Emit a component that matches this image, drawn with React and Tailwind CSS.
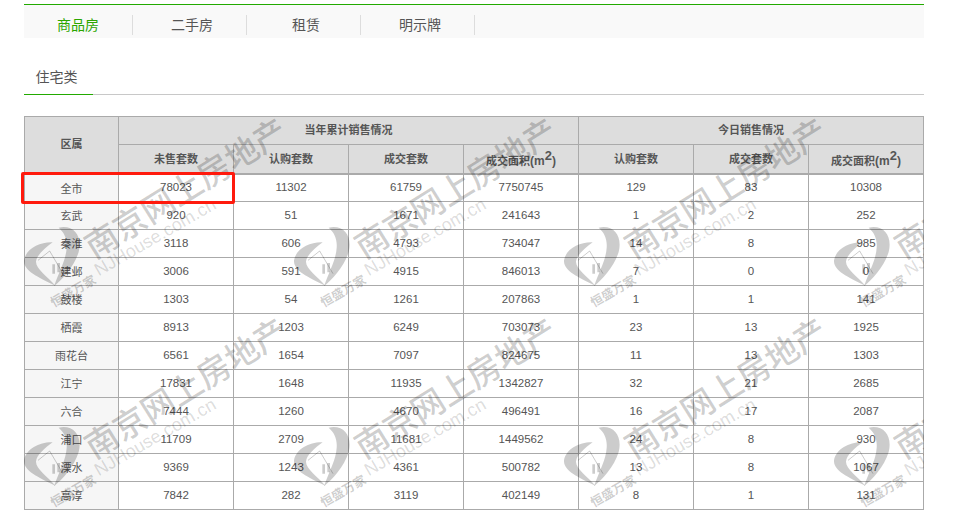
import React from 'react';

const cjk = '"Noto Sans CJK SC", sans-serif';

const rows = [
  ['全市', '78023', '11302', '61759', '7750745', '129', '83', '10308'],
  ['玄武', '920', '51', '1671', '241643', '1', '2', '252'],
  ['秦淮', '3118', '606', '4793', '734047', '14', '8', '985'],
  ['建邺', '3006', '591', '4915', '846013', '7', '0', '0'],
  ['鼓楼', '1303', '54', '1261', '207863', '1', '1', '141'],
  ['栖霞', '8913', '1203', '6249', '703073', '23', '13', '1925'],
  ['雨花台', '6561', '1654', '7097', '824675', '11', '13', '1303'],
  ['江宁', '17831', '1648', '11935', '1342827', '32', '21', '2685'],
  ['六合', '7444', '1260', '4670', '496491', '16', '17', '2087'],
  ['浦口', '11709', '2709', '11681', '1449562', '24', '8', '930'],
  ['溧水', '9369', '1243', '4361', '500782', '13', '8', '1067'],
  ['高淳', '7842', '282', '3119', '402149', '8', '1', '131'],
];

const tabs = ['二手房', '租赁', '明示牌'];

function AreaLabel() {
  return (
    <span className="relative top-[3px] whitespace-nowrap">
      成交面积
      <span className="font-['Liberation_Sans'] text-[12px]">
        (m<span className="relative top-[-5px] text-[13px] leading-none">2</span>)
      </span>
    </span>
  );
}

function Th({ children, ...rest }) {
  return (
    <th
      {...rest}
      className="border border-[#aaa] bg-[#ddd] p-0 pb-[2px] text-center align-middle text-[11px] font-bold text-[#555]"
    >
      {children}
    </th>
  );
}

// one repeat of the site's watermark
function Watermark() {
  return (
    <div className="relative h-[200px] w-[270px] text-black/20">
      <svg className="absolute left-0 top-[111px]" width="58" height="60" viewBox="0 0 174 180" fill="currentColor">
        <path d="M104 2C150 -8 176 28 164 75C150 120 116 156 90 178C106 132 126 98 128 62C130 34 120 16 104 2Z" />
        <path d="M86 46C50 44 6 64 0 100C-2 130 36 148 94 176C70 148 36 126 36 104C38 84 62 64 86 46Z" />
        <path d="M42 100L77 72L117 140" fill="none" stroke="currentColor" strokeWidth="3" />
        <path d="M85 112h8v28h-8zM100 108h8v28h-8z" />
      </svg>
      <span className="absolute left-[161px] top-[71px] -translate-x-1/2 -translate-y-1/2 -rotate-[32deg] whitespace-nowrap font-['Noto_Sans_CJK_SC'] text-[33px] font-medium leading-none">
        南京网上房地产
      </span>
      <span className="absolute left-[131px] top-[121px] -translate-x-1/2 -translate-y-1/2 -rotate-[30deg] whitespace-nowrap font-['Liberation_Sans'] text-[18px] leading-none text-black/15">
        NJHouse.com.cn
      </span>
      <span className="absolute left-[49px] top-[175px] -translate-x-1/2 -translate-y-1/2 -rotate-[30deg] whitespace-nowrap font-['Noto_Sans_CJK_SC'] text-[12.5px] font-bold leading-none">
        恒盛万家
      </span>
    </div>
  );
}

export default function App() {
  return (
    <div className="min-h-[525px] w-[962px] bg-white pt-1 pl-6" style={{ fontFamily: cjk }}>
      <div className="w-[900px]">
        {/* top tabs */}
        <div className="flex h-[34px] items-start border-t border-[#22aa00] bg-[#f9f9f9] text-[14px] text-[#555]">
          <div className="mt-[10px] flex h-5 w-[109px] items-center justify-center border-r border-[#ddd] pb-[2px] text-[#2ba600]">
            商品房
          </div>
          {tabs.map((t) => (
            <div key={t} className="mt-[10px] flex h-5 w-[114px] items-center justify-center border-r border-[#ddd] pb-[2px] pl-[5px]">
              {t}
            </div>
          ))}
        </div>

        {/* sub tab */}
        <div className="mt-6 flex h-[33px] border-b border-[#c8c8c8] text-[14px] text-[#555]">
          <div className="-mb-px flex w-[69px] items-center justify-center border-b border-[#22aa00] pb-[3px] pr-[4px]">
            住宅类
          </div>
        </div>

        {/* table */}
        <div className="relative mt-[21px]">
          <table className="w-[900px] table-fixed border-collapse">
            <colgroup>
              <col className="w-[94px]" />
              {[0, 1, 2, 3, 4, 5, 6].map((i) => (
                <col key={i} className="w-[115px]" />
              ))}
            </colgroup>
            <thead>
              <tr className="h-[28px]">
                <Th rowSpan={2}><span className="relative top-[-1px]">区属</span></Th>
                <Th colSpan={4}>当年累计销售情况</Th>
                <Th colSpan={3}>今日销售情况</Th>
              </tr>
              <tr className="h-[29px] border-b-2 border-[#aaa]">
                <Th>未售套数</Th>
                <Th>认购套数</Th>
                <Th>成交套数</Th>
                <Th><AreaLabel /></Th>
                <Th>认购套数</Th>
                <Th>成交套数</Th>
                <Th><AreaLabel /></Th>
              </tr>
            </thead>
            <tbody>
              {rows.map((r) => (
                <tr key={r[0]} className="h-[28px]">
                  <td className="border border-[#aaa] bg-[#f6f6f6] p-0 text-center text-[11px] text-[#555]">{r[0]}</td>
                  {r.slice(1).map((v, i) => (
                    <td key={i} className="border border-[#aaa] p-0 text-center font-['Liberation_Sans'] text-[11.5px] text-[#555]">
                      {v}
                    </td>
                  ))}
                </tr>
              ))}
            </tbody>
          </table>

          {/* watermark over the table */}
          <div className="pointer-events-none absolute inset-0 grid grid-cols-[repeat(4,270px)] content-start overflow-hidden">
            {[0, 1, 2, 3, 4, 5, 6, 7].map((i) => (
              <Watermark key={i} />
            ))}
          </div>

          {/* red highlight box */}
          <div className="pointer-events-none absolute left-[-3px] top-[56px] h-[32px] w-[214px] rounded-[2px] border-[3px] border-[#ff1a0d]" />
        </div>
      </div>
    </div>
  );
}
